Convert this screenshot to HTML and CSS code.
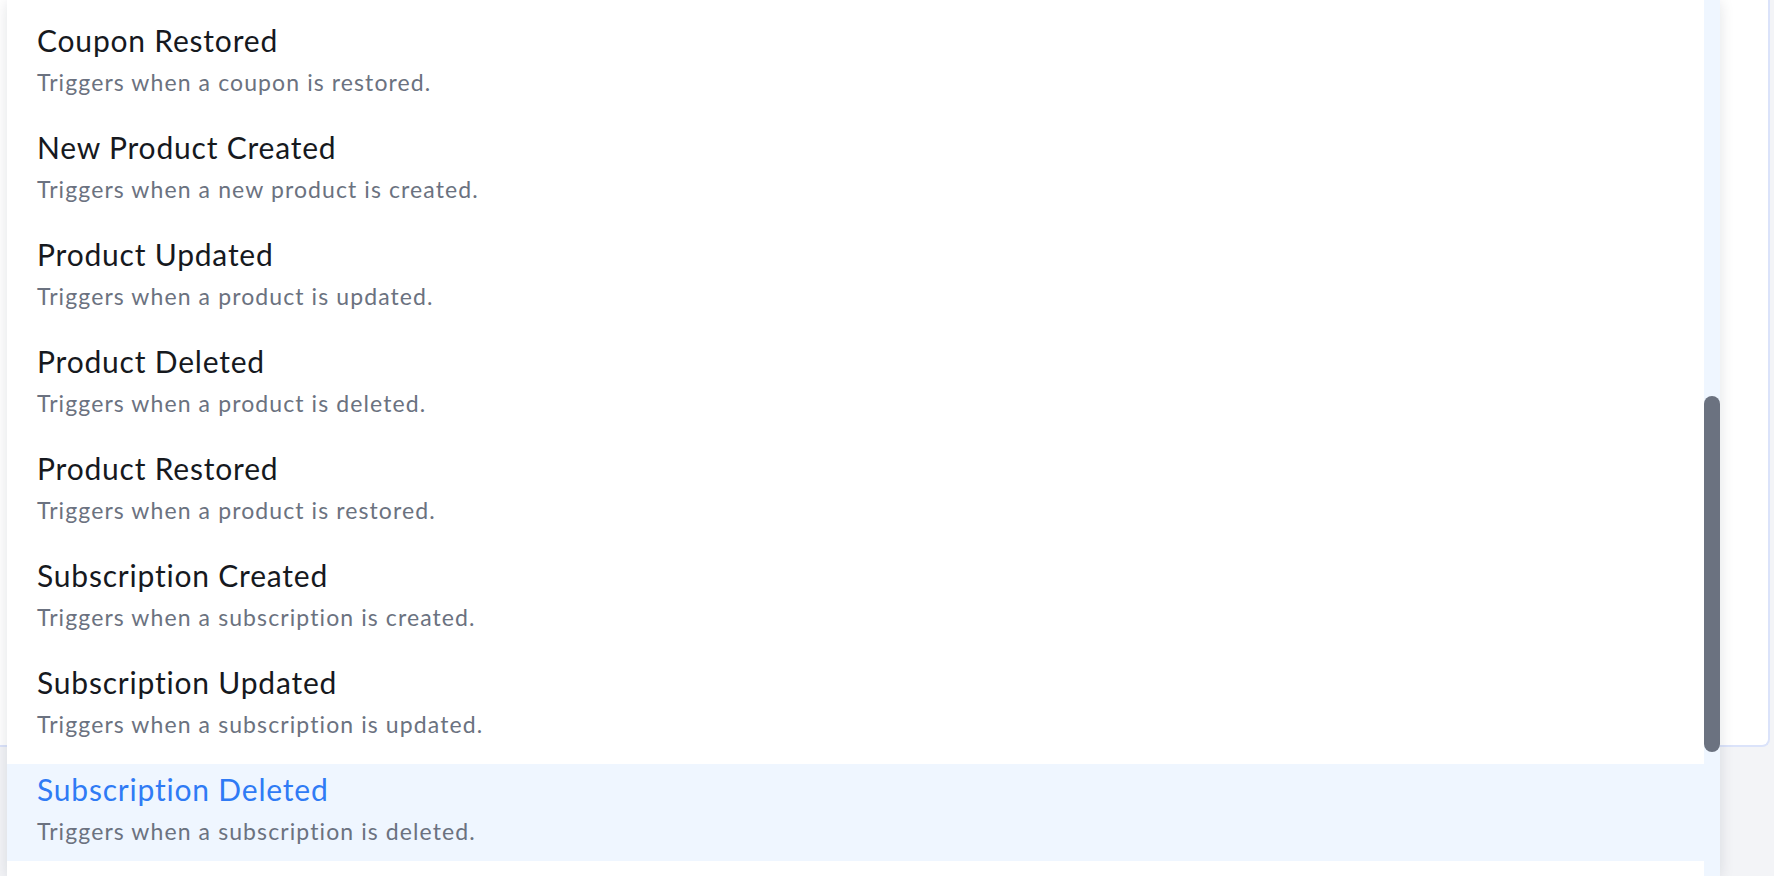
FILE: index.html
```html
<!DOCTYPE html>
<html lang="en">
<head>
  <meta charset="UTF-8">
  <meta name="viewport" content="width=device-width, initial-scale=1.0">
  <title>Trigger Picker</title>
  <link rel="stylesheet" href="styles.css">
</head>
<body>
  <div class="page">
    <div class="card"></div>
  </div>

  <div class="dropdown">
    <ul class="trigger-list">
      <li class="trigger">
        <div class="trigger-title">Coupon Restored</div>
        <div class="trigger-desc">Triggers when a coupon is restored.</div>
      </li>
      <li class="trigger">
        <div class="trigger-title">New Product Created</div>
        <div class="trigger-desc">Triggers when a new product is created.</div>
      </li>
      <li class="trigger">
        <div class="trigger-title">Product Updated</div>
        <div class="trigger-desc">Triggers when a product is updated.</div>
      </li>
      <li class="trigger">
        <div class="trigger-title">Product Deleted</div>
        <div class="trigger-desc">Triggers when a product is deleted.</div>
      </li>
      <li class="trigger">
        <div class="trigger-title">Product Restored</div>
        <div class="trigger-desc">Triggers when a product is restored.</div>
      </li>
      <li class="trigger">
        <div class="trigger-title">Subscription Created</div>
        <div class="trigger-desc">Triggers when a subscription is created.</div>
      </li>
      <li class="trigger">
        <div class="trigger-title">Subscription Updated</div>
        <div class="trigger-desc">Triggers when a subscription is updated.</div>
      </li>
      <li class="trigger active">
        <div class="trigger-title">Subscription Deleted</div>
        <div class="trigger-desc">Triggers when a subscription is deleted.</div>
      </li>
    </ul>
    <div class="scroll-track">
      <div class="scroll-thumb"></div>
    </div>
  </div>
</body>
</html>
```

FILE: styles.css
```css
body {
  margin: 0;
  overflow: hidden;
  height: 100vh;
  background: #f3f4f7;
  font-family: Lato, "Noto Sans", sans-serif;
}

.page {
  height: 100%;
  padding-right: 4px;
}

/* the settings card behind the open menu */
.card {
  height: 747px;
  background: #fff;
  border-right: 2px solid #dbe3fa;
  border-bottom: 2px solid #dbe3fa;
  border-bottom-right-radius: 8px;
  box-sizing: border-box;
}

.dropdown {
  position: absolute;
  top: 0;
  left: 7px;
  width: 1713px;
  height: 100%;
  display: flex;
  background: #fff;
  box-shadow: 0 2px 14px rgba(17, 24, 39, 0.12);
}

.trigger-list {
  flex: 1;
  list-style: none;
  margin: 0;
  padding: 15px 0 0;
}

.trigger {
  padding: 5px 30px 14px;
  margin-bottom: 10px;
  cursor: pointer;
}

.trigger-title {
  font-size: 30px;
  line-height: 40px;
  letter-spacing: 0.8px;
  color: #16191e;
}

.trigger-desc {
  margin-top: 6px;
  font-size: 23px;
  line-height: 32px;
  letter-spacing: 1.1px;
  color: #6b7280;
}

.trigger.active {
  background: #eff6ff;
}

.trigger.active .trigger-title {
  color: #2f7bf5;
}

.scroll-track {
  width: 16px;
  background: #eff6ff;
}

.scroll-thumb {
  margin-top: 396px;
  height: 356px;
  border-radius: 8px;
  background: #6b7280;
}
```
